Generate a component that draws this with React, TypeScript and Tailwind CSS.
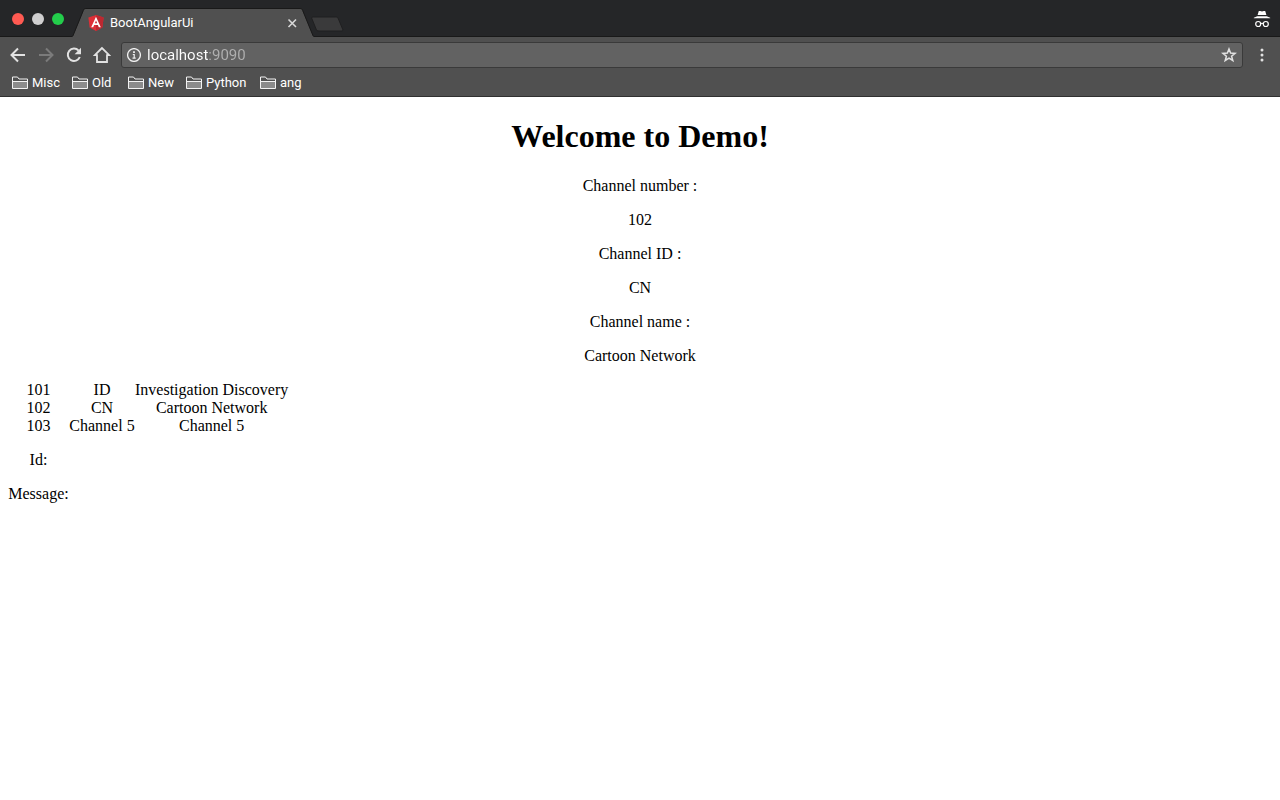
import type { ReactNode } from "react";

const bookmarks = [
  { label: "Misc", width: "w-[60px]" },
  { label: "Old", width: "w-14" },
  { label: "New", width: "w-[58px]" },
  { label: "Python", width: "w-[74px]" },
  { label: "ang", width: "w-14" },
];

const channels = [
  { number: "101", id: "ID", name: "Investigation Discovery" },
  { number: "102", id: "CN", name: "Cartoon Network" },
  { number: "103", id: "Channel 5", name: "Channel 5" },
];

function IconButton({ label, children, disabled }: { label: string; children: ReactNode; disabled?: boolean }) {
  return (
    <button
      type="button"
      aria-label={label}
      disabled={disabled}
      className={`flex size-7 shrink-0 items-center justify-center ${disabled ? "text-[#7b7b7b]" : "text-[#e2e2e2]"}`}
    >
      {children}
    </button>
  );
}

function AngularLogo() {
  return (
    <svg viewBox="0 0 16 16" className="size-4 shrink-0" aria-hidden="true">
      <path d="M8 0 15.600 2.600 14.400 12.500 8 16 1.600 12.500.4 2.600Z" fill="#dd2f37" />
      <path d="M8 0 15.600 2.600 14.400 12.500 8 16Z" fill="#bd2830" />
      <path d="M8 1.800 3.200 12.200h2l.9-2.300h3.800l.9 2.300h2L8 1.800Zm0 3.600 1.200 2.900H6.800L8 5.400Z" fill="#fff" fillRule="evenodd" />
    </svg>
  );
}

function Incognito() {
  return (
    <svg viewBox="0 0 18 18" className="size-[18px] shrink-0" fill="none" role="img" aria-label="Incognito">
      <path d="M5.800 1h1.500L9 1.500 10.700 1h1.500l1.200 4H4.600l1.200-4Z" fill="#fff" />
      <path d="M.8 8.300v-.5L4.200 6.300h9.600l3.400 1.500v.5Z" fill="#fff" />
      <circle cx="5.200" cy="14" r="2.500" stroke="#fff" strokeWidth="1.200" />
      <circle cx="12.800" cy="14" r="2.500" stroke="#fff" strokeWidth="1.200" />
      <path d="M7.700 13.600q1.300-.7 2.600 0" stroke="#fff" strokeWidth="1.200" />
    </svg>
  );
}

function Folder() {
  return (
    <svg viewBox="0 0 16 14" className="h-3.5 w-4 shrink-0" aria-hidden="true">
      <path d="M.5 12.500V1h5l1.500 2h8.500v9.500Z" fill="#505050" stroke="#f2f2f2" />
      <path d="M1 5.500h14v6.500H1Z" fill="#8b8b8b" />
      <path d="M1 5.500h14" stroke="#f2f2f2" />
    </svg>
  );
}

function BrowserChrome() {
  return (
    <header className="bg-[#505050] font-['Roboto',sans-serif] text-white">
      <div className="flex h-[37px] items-end bg-[#252628] shadow-[inset_0_-1px_0_#191919]">
        <div className="flex h-[37px] w-[72px] shrink-0 items-center gap-2 pl-3">
          <button type="button" aria-label="Close window" className="size-3 rounded-full bg-[#ff5a52]" />
          <button type="button" aria-label="Minimize window" className="size-3 rounded-full bg-[#d0cfd0]" />
          <button type="button" aria-label="Zoom window" className="size-3 rounded-full bg-[#23cd4b]" />
        </div>
        <svg viewBox="0 0 14 29" className="h-[29px] w-3.5 shrink-0" aria-hidden="true">
          <path d="M0 29C1 28.500 1.300 27.500 1.800 26.200L11.300 3C12 1.200 12.700.5 14 .5V29Z" fill="#505050" />
          <path d="M0 28.500C1 28 1.300 27 1.800 25.700L11.300 2.500C12 .8 12.700.5 14 .5" fill="none" stroke="#191919" />
        </svg>
        <div className="flex h-[29px] w-[214px] shrink-0 items-center border-t border-[#191919] bg-[#505050] pl-0.5">
          <AngularLogo />
          <span className="ml-1.5 flex-1 text-[13px]">BootAngularUi</span>
          <button type="button" aria-label="Close tab" className="flex size-4 items-center justify-center">
            <svg viewBox="0 0 10 10" className="size-2.5" stroke="#d8d8d8" strokeWidth="1.600" aria-hidden="true">
              <path d="M1.500 1.500l7.500 7.500M9 1.500l-7.500 7.500" />
            </svg>
          </button>
        </div>
        <svg viewBox="0 0 14 29" className="h-[29px] w-3.5 shrink-0" aria-hidden="true">
          <path d="M14 29C13 28.500 12.700 27.500 12.200 26.200L2.700 3C2 1.200 1.300.5 0 .5V29Z" fill="#505050" />
          <path d="M14 28.500C13 28 12.700 27 12.200 25.700L2.700 2.500C2 .8 1.300.5 0 .5" fill="none" stroke="#191919" />
        </svg>
        <button type="button" aria-label="New tab" className="mb-[5px] -ml-1">
          <svg viewBox="0 0 34 16" className="h-4 w-[34px]" aria-hidden="true">
            <path d="M3.500 1h22c1.500 0 2.200.4 2.800 1.700l4.400 10.600c.4 1-.1 1.700-1.200 1.700H9c-1.500 0-2.200-.4-2.800-1.700L1.900 2.700C1.400 1.500 2 1 3.500 1Z" fill="#3a3a3b" stroke="#1f1f20" />
          </svg>
        </button>
        <div className="flex h-[37px] flex-1 items-center justify-end pr-[9px]">
          <Incognito />
        </div>
      </div>

      <div className="flex h-9 items-center pl-1">
        <IconButton label="Back">
          <svg viewBox="0 0 16 16" className="size-4" fill="none" stroke="currentColor" strokeWidth="2" aria-hidden="true">
            <path d="M8 1.500 1.500 8 8 14.500M1.800 8H15" />
          </svg>
        </IconButton>
        <IconButton label="Forward" disabled>
          <svg viewBox="0 0 16 16" className="size-4" fill="none" stroke="currentColor" strokeWidth="2" aria-hidden="true">
            <path d="M8 1.500 14.500 8 8 14.500M14.200 8H1" />
          </svg>
        </IconButton>
        <IconButton label="Reload">
          <svg viewBox="0 0 16 16" className="size-4" fill="none" aria-hidden="true">
            <path d="M12.600 3.600A6.200 6.200 0 1 0 13.800 10" stroke="currentColor" strokeWidth="2" />
            <path d="M15 .8v6.400H8.600Z" fill="currentColor" />
          </svg>
        </IconButton>
        <IconButton label="Home">
          <svg viewBox="0 0 18 18" className="size-[18px]" fill="none" stroke="currentColor" strokeWidth="1.800" aria-hidden="true">
            <path d="M9 2 1.800 9.200H4V16h10V9.200h2.200Z" />
          </svg>
        </IconButton>
        <div className="ml-[5px] flex h-[26px] flex-1 items-center rounded-[3px] border border-[#3a3a3a] bg-[#626262] px-[5px]">
          <button type="button" aria-label="View site information" className="shrink-0">
            <svg viewBox="0 0 14 14" className="size-3.5" fill="none" stroke="#f0f0f0" aria-hidden="true">
              <circle cx="7" cy="7" r="6.400" strokeWidth="1.300" />
              <path d="M5.800 6.500H7.200v3.800M5.500 10.200h3.200" strokeWidth="1.200" />
              <path d="M7 3.200v1.700" strokeWidth="1.800" />
            </svg>
          </button>
          <input
            type="text"
            aria-label="Address"
            defaultValue="localhost:9090"
            className="ml-1.5 h-6 min-w-0 flex-1 bg-[linear-gradient(90deg,#ffffff_61px,#b0b0b0_61px)] bg-clip-text text-[15px] text-white outline-none [-webkit-text-fill-color:transparent]"
          />
          <button type="button" aria-label="Bookmark this page" className="shrink-0">
            <svg viewBox="0 0 16 16" className="size-4" fill="none" stroke="#e2e2e2" strokeWidth="1.500" aria-hidden="true">
              <path d="m8 2 1.600 4.100 4.500.3-3.500 2.800 1.200 4.300L8 11.100l-3.800 2.400 1.200-4.300L1.900 6.400l4.500-.3Z" />
            </svg>
          </button>
        </div>
        <button type="button" aria-label="Menu" className="flex w-[37px] shrink-0 justify-center">
          <svg viewBox="0 0 4 14" className="h-3.5 w-1" fill="#e2e2e2" aria-hidden="true">
            <circle cx="2" cy="2" r="1.500" />
            <circle cx="2" cy="7" r="1.500" />
            <circle cx="2" cy="12" r="1.500" />
          </svg>
        </button>
      </div>

      <nav aria-label="Bookmarks" className="flex h-6 items-start border-b border-[#303030] pl-3 text-[13px] leading-5">
        {bookmarks.map(({ label, width }) => (
          <button key={label} type="button" className={`flex shrink-0 items-center gap-1 ${width}`}>
            <Folder />
            <span>{label}</span>
          </button>
        ))}
      </nav>
    </header>
  );
}

export default function App() {
  return (
    <div className="min-h-screen bg-white">
      <BrowserChrome />
      <main className="px-2 pt-5 font-['Liberation_Serif',serif] text-base leading-[18px] text-black">
        <section className="flex flex-col items-center gap-4 text-center">
          <h1 className="mb-1.5 text-[32px] leading-[38px] font-bold">Welcome to Demo!</h1>
          <p>Channel number :</p>
          <p>102</p>
          <p>Channel ID :</p>
          <p>CN</p>
          <p>Channel name :</p>
          <p>Cartoon Network</p>
        </section>
        <table className="mt-4 text-center">
          <tbody>
            {channels.map((channel) => (
              <tr key={channel.number}>
                <td className="min-w-[61px] p-0">{channel.number}</td>
                <td className="min-w-[66px] p-0">{channel.id}</td>
                <td className="p-0">{channel.name}</td>
              </tr>
            ))}
            <tr>
              <td className="pt-4">Id:</td>
            </tr>
            <tr>
              <td className="pt-4">Message:</td>
            </tr>
          </tbody>
        </table>
      </main>
    </div>
  );
}
